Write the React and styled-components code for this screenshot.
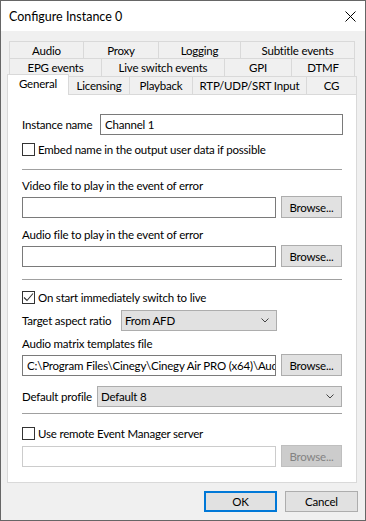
import React from 'react';
import styled, { createGlobalStyle } from 'styled-components';

const GlobalStyle = createGlobalStyle`
  html, body {
    margin: 0;
    padding: 0;
    background: #ffffff;
  }
  body {
    font-family: 'Segoe UI', Lato, Roboto, sans-serif;
    font-size: 11.5px;
    letter-spacing: -0.2px;
    color: #000;
  }
`;

const tabRows = [
  [
    { label: 'Audio', w: 75 },
    { label: 'Proxy', w: 75 },
    { label: 'Logging', w: 82 },
    { label: 'Subtitle events', w: 114 },
  ],
  [
    { label: 'EPG events', w: 93 },
    { label: 'Live switch events', w: 123 },
    { label: 'GPI', w: 67 },
    { label: 'DTMF', w: 63 },
  ],
];

const frontRow = [
  { label: 'General', w: 62, active: true },
  { label: 'Licensing', w: 61 },
  { label: 'Playback', w: 63 },
  { label: 'RTP/UDP/SRT Input', w: 114 },
  { label: 'CG', w: 50 },
];

const App = () => {
  return (
    <>
      <GlobalStyle />
      <Window>
        <TitleBar>
          <Title>Configure Instance 0</Title>
          <CloseIcon width="11" height="11" viewBox="0 0 11 11">
            <path d="M0.5 0.5 L10.5 10.5 M10.5 0.5 L0.5 10.5" stroke="#000" strokeWidth="1" fill="none" />
          </CloseIcon>
        </TitleBar>

        <Body>
          <Tabs>
            {tabRows.map((row, i) => (
              <TabRow key={i} $offset={2} $h={i === 0 ? 17 : 18}>
                {row.map((t) => (
                  <Tab key={t.label} $w={t.w} $h={i === 0 ? 17 : 18}>{t.label}</Tab>
                ))}
              </TabRow>
            ))}
            <TabRow $offset={0} $h={18}>
              {frontRow.map((t) => (
                <Tab key={t.label} $w={t.w} $h={18} $active={t.active}>{t.label}</Tab>
              ))}
            </TabRow>
          </Tabs>

          <Panel>
            <Row $mt={18}>
              <Label $w={78}>Instance name</Label>
              <TextInput defaultValue="Channel 1" />
            </Row>
            <CheckRow $mt={7}>
              <CheckBox />
              <span>Embed name in the output user data if possible</span>
            </CheckRow>
            <Separator $mt={12} />

            <Caption $mt={8}>Video file to play in the event of error</Caption>
            <Row $mt={2}>
              <TextInput />
              <Button>Browse...</Button>
            </Row>
            <Caption $mt={9}>Audio file to play in the event of error</Caption>
            <Row $mt={2}>
              <TextInput />
              <Button>Browse...</Button>
            </Row>
            <Separator $mt={12} />

            <CheckRow $mt={10}>
              <CheckBox>
                <svg width="11" height="11" viewBox="0 0 11 11">
                  <polyline points="1,5.5 4,8.5 10,1.5" stroke="#333" strokeWidth="1.1" fill="none" />
                </svg>
              </CheckBox>
              <span>On start immediately switch to live</span>
            </CheckRow>
            <Row $mt={4}>
              <Label $w={99}>Target aspect ratio</Label>
              <Combo $w={156}>
                <span>From AFD</span>
                <Chevron />
              </Combo>
            </Row>
            <Caption $mt={5}>Audio matrix templates file</Caption>
            <Row $mt={2}>
              <TextInput defaultValue="C:\Program Files\Cinegy\Cinegy Air PRO (x64)\Audio" />
              <Button>Browse...</Button>
            </Row>
            <Row $mt={9}>
              <Label $w={75}>Default profile</Label>
              <Combo $grow>
                <span>Default 8</span>
                <Chevron />
              </Combo>
            </Row>
            <Separator $mt={6} />

            <CheckRow $mt={12}>
              <CheckBox />
              <span>Use remote Event Manager server</span>
            </CheckRow>
            <Row $mt={4}>
              <TextInput disabled />
              <Button disabled>Browse...</Button>
            </Row>
          </Panel>

          <Footer>
            <DialogButton $primary>OK</DialogButton>
            <DialogButton>Cancel</DialogButton>
          </Footer>
        </Body>
      </Window>
    </>
  );
};

const Chevron = () => (
  <ChevronSvg width="8" height="5" viewBox="0 0 8 5">
    <polyline points="0.5,0.5 4,4 7.5,0.5" stroke="#444" strokeWidth="1" fill="none" />
  </ChevronSvg>
);

const Window = styled.div`
  width: 366px;
  height: 521px;
  box-sizing: border-box;
  border: 1px solid #666666;
  background: #f0f0f0;
  display: flex;
  flex-direction: column;
`;

const TitleBar = styled.div`
  height: 30px;
  flex: none;
  background: #ffffff;
  display: flex;
  align-items: center;
  justify-content: space-between;
  padding: 0 9px 0 8px;
`;

const Title = styled.div`
  font-size: 12.5px;
  letter-spacing: 0;
  color: #000;
  margin-top: 1px;
`;

const CloseIcon = styled.svg`
  display: block;
  margin-top: 1px;
`;

const Body = styled.div`
  flex: 1;
  display: flex;
  flex-direction: column;
  padding: 10px 8px 0 6px;
`;

const Tabs = styled.div`
  display: flex;
  flex-direction: column;
`;

const TabRow = styled.div`
  display: flex;
  align-items: flex-end;
  height: ${(p) => p.$h}px;
  margin-left: ${(p) => p.$offset}px;
  position: relative;
  z-index: 2;
`;

const Tab = styled.div`
  box-sizing: border-box;
  width: ${(p) => p.$w}px;
  height: ${(p) => (p.$active ? p.$h + 3 : p.$h)}px;
  flex: none;
  display: flex;
  align-items: center;
  justify-content: center;
  background: ${(p) => (p.$active ? '#ffffff' : '#f0f0f0')};
  border-top: 1px solid #d9d9d9;
  border-right: 1px solid #d9d9d9;
  margin-bottom: ${(p) => (p.$active ? '-1px' : '0')};
  position: relative;
  z-index: ${(p) => (p.$active ? 2 : 1)};
  white-space: nowrap;
  padding-bottom: ${(p) => (p.$active ? '3px' : '0')};

  &:first-child {
    border-left: 1px solid #d9d9d9;
  }
`;

const Panel = styled.div`
  box-sizing: border-box;
  width: 350px;
  height: 389px;
  flex: none;
  background: #ffffff;
  border: 1px solid #d9d9d9;
  padding: 0 13px 0 14px;
  display: flex;
  flex-direction: column;
`;

const Row = styled.div`
  display: flex;
  align-items: flex-end;
  gap: 5px;
  margin-top: ${(p) => p.$mt}px;
  height: 22px;
  flex: none;
`;

const Label = styled.div`
  width: ${(p) => p.$w}px;
  flex: none;
  align-self: center;
  white-space: nowrap;
  margin-right: -5px;
`;

const Caption = styled.div`
  height: 16px;
  line-height: 16px;
  flex: none;
  margin-top: ${(p) => p.$mt}px;
  white-space: nowrap;
`;

const CheckRow = styled.label`
  display: flex;
  align-items: center;
  gap: 3px;
  height: 15px;
  flex: none;
  margin-top: ${(p) => p.$mt}px;
  white-space: nowrap;
`;

const CheckBox = styled.span`
  box-sizing: border-box;
  width: 13px;
  height: 13px;
  flex: none;
  border: 1px solid #333333;
  background: #ffffff;
  display: flex;
  align-items: center;
  justify-content: center;

  svg {
    display: block;
  }
`;

const Separator = styled.div`
  height: 1px;
  flex: none;
  background: #a0a0a0;
  margin-top: ${(p) => p.$mt}px;
  margin-right: 1px;
`;

const TextInput = styled.input`
  box-sizing: border-box;
  flex: 1;
  min-width: 0;
  height: 21px;
  border: 1px solid ${(p) => (p.disabled ? '#cccccc' : '#7a7a7a')};
  background: #ffffff;
  padding: 0 0 0 4px;
  margin: 0;
  font-family: inherit;
  font-size: inherit;
  letter-spacing: inherit;
  color: #000;
  outline: none;
`;

const Button = styled.button`
  box-sizing: border-box;
  width: 61px;
  height: 22px;
  flex: none;
  border: 1px solid ${(p) => (p.disabled ? '#bfbfbf' : '#adadad')};
  background: ${(p) => (p.disabled ? '#cccccc' : '#e1e1e1')};
  color: ${(p) => (p.disabled ? '#838383' : '#000')};
  font-family: inherit;
  font-size: inherit;
  letter-spacing: inherit;
  padding: 0;
  margin: 0 1px 0 0;
`;

const Combo = styled.div`
  box-sizing: border-box;
  width: ${(p) => (p.$grow ? 'auto' : `${p.$w}px`)};
  flex: ${(p) => (p.$grow ? '1' : 'none')};
  height: 21px;
  border: 1px solid #adadad;
  background: #e1e1e1;
  display: flex;
  align-items: center;
  justify-content: space-between;
  padding: 0 7px 0 3px;
  margin-right: ${(p) => (p.$grow ? '1px' : '0')};
`;

const ChevronSvg = styled.svg`
  display: block;
`;

const Footer = styled.div`
  display: flex;
  justify-content: flex-end;
  gap: 8px;
  padding-top: 8px;
  width: 351px;
`;

const DialogButton = styled.button`
  box-sizing: border-box;
  width: 73px;
  height: 21px;
  border: ${(p) => (p.$primary ? '2px solid #0078d7' : '1px solid #adadad')};
  background: #e1e1e1;
  font-family: inherit;
  font-size: inherit;
  letter-spacing: inherit;
  color: #000;
  padding: 0;
  margin: 0;
`;

export default App;
